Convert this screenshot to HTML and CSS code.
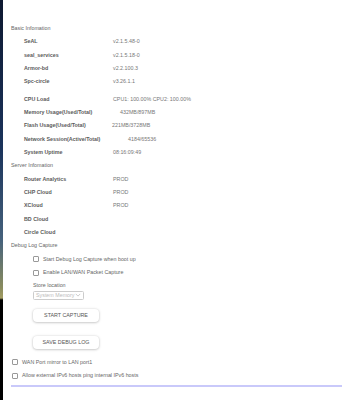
FILE: index.html
```html
<!DOCTYPE html>
<html lang="en">
<head>
  <meta charset="UTF-8" />
  <meta name="viewport" content="width=device-width, initial-scale=1.0" />
  <title>Device Information</title>
  <link rel="stylesheet" href="styles.css">
</head>
<body>
  <div class="panel">
    <p class="section-title">Basic Infomation</p>
    <div class="group">
      <div class="row"><span class="label">SeAL</span><span class="value">v2.1.5.48-0</span></div>
      <div class="row"><span class="label">seal_services</span><span class="value">v2.1.5.18-0</span></div>
      <div class="row"><span class="label">Armor-bd</span><span class="value">v2.2.100.3</span></div>
      <div class="row"><span class="label">Spc-circle</span><span class="value">v3.26.1.1</span></div>
    </div>
    <div class="group group-gap">
      <div class="row"><span class="label">CPU Load</span><span class="value">CPU1: 100.00% CPU2: 100.00%</span></div>
      <div class="row"><span class="label">Memory Usage(Used/Total)</span><span class="value indent-sm">432MB/897MB</span></div>
      <div class="row"><span class="label">Flash Usage(Used/Total)</span><span class="value outdent">221MB/3728MB</span></div>
      <div class="row"><span class="label">Network Session(Active/Total)</span><span class="value indent-lg">4184/65536</span></div>
      <div class="row"><span class="label">System Uptime</span><span class="value">08:16:09:49</span></div>
    </div>

    <p class="section-title">Server Infomation</p>
    <div class="group">
      <div class="row"><span class="label">Router Analytics</span><span class="value">PROD</span></div>
      <div class="row"><span class="label">CHP Cloud</span><span class="value">PROD</span></div>
      <div class="row"><span class="label">XCloud</span><span class="value">PROD</span></div>
      <div class="row"><span class="label">BD Cloud</span><span class="value"></span></div>
      <div class="row"><span class="label">Circle Cloud</span><span class="value"></span></div>
    </div>

    <p class="section-title">Debug Log Capture</p>
    <div class="debug">
      <label class="check"><span class="box"></span>Start Debug Log Capture when boot up</label>
      <label class="check"><span class="box"></span>Enable LAN/WAN Packet Capture</label>
      <p class="field-label">Store location</p>
      <div class="select">
        <span>System Memory</span>
        <svg class="chevron" viewBox="0 0 8 5" width="6" height="4"><path d="M1 1 L4 4 L7 1" fill="none" stroke="#bbb" stroke-width="1"/></svg>
      </div>
      <button class="btn">START CAPTURE</button>
      <button class="btn btn-save">SAVE DEBUG LOG</button>
    </div>

    <div class="options">
      <label class="check"><span class="box"></span>WAN Port mirror to LAN port1</label>
      <label class="check"><span class="box"></span>Allow external IPv6 hosts ping internal IPv6 hosts</label>
    </div>
    <div class="divider"></div>
  </div>
</body>
</html>
```

FILE: styles.css
```css
* {
  margin: 0;
  padding: 0;
  box-sizing: border-box;
}

body {
  font-family: "Liberation Sans", Arial, sans-serif;
  font-size: 5.33px;
  line-height: 13.33px;
  color: #666;
  background: linear-gradient(to bottom, #0d1830 0px, #1b345c 150px, #46627c 240px, #8a8c5e 288px, #a29c62 298px, #000 300px);
  min-height: 400px;
}

.panel {
  margin-left: 3px;
  background: #fff;
  min-height: 400px;
  padding-top: 22px;
}

.section-title {
  padding-left: 8px;
  color: #666;
}

.row {
  display: flex;
  padding-left: 21px;
}

.label {
  width: 89px;
  font-weight: bold;
  color: #5a5a5a;
}

.value {
  color: #777;
}

.indent-sm {
  padding-left: 7px;
}

.indent-lg {
  padding-left: 15px;
}

.outdent {
  margin-left: -1px;
}

.group-gap {
  margin-top: 4px;
}

.debug {
  padding-left: 30px;
  display: flex;
  flex-direction: column;
  align-items: flex-start;
}

.check {
  display: flex;
  align-items: center;
  gap: 4px;
  color: #666;
}

.box {
  width: 6px;
  height: 6px;
  border: 0.7px solid #999;
  border-radius: 1px;
  background: #fff;
}

.field-label {
  color: #666;
}

.select {
  display: flex;
  align-items: center;
  justify-content: space-between;
  width: 51px;
  height: 9px;
  margin-top: -2px;
  padding: 0 2px 0 2px;
  border: 0.7px solid #ccc;
  border-radius: 1.5px;
  color: #bbb;
  line-height: 9px;
}

.btn {
  margin-top: 9px;
  width: 66px;
  height: 13px;
  border: none;
  border-radius: 4px;
  background: #fff;
  box-shadow: 0 0.5px 2.5px rgba(0, 0, 0, 0.3);
  font-family: "Liberation Sans", Arial, sans-serif;
  font-size: 5.33px;
  color: #555;
  cursor: pointer;
}

.btn-save {
  margin-top: 14px;
}

.options {
  margin-top: 7px;
  padding-left: 9px;
}

.options .check {
  gap: 4px;
}

.divider {
  margin-top: 3px;
  margin-left: 8px;
  height: 2px;
  background: #c9c9fa;
}
```
